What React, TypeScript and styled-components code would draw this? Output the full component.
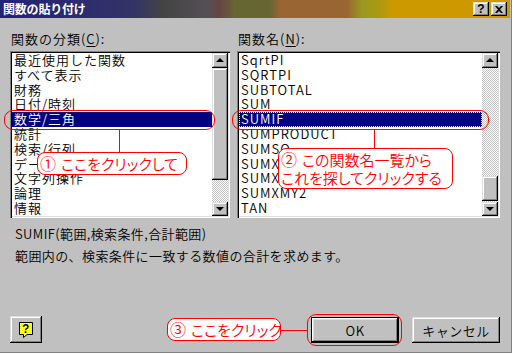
import React from "react";
import styled, { createGlobalStyle } from "styled-components";

const Global = createGlobalStyle`
  html, body { margin: 0; padding: 0; background: #ffffff; }
  body { font-family: "Noto Sans CJK JP", "Noto Sans", sans-serif; }
  #root { width: 514px; height: 354px; overflow: hidden; }
`;

const FONT = `"Noto Sans CJK JP", "Noto Sans", sans-serif`;
const bevel = `box-shadow: inset -1px -1px #000, inset 1px 1px #dfdfdf, inset -2px -2px #808080, inset 2px 2px #ffffff;`;

const Dialog = styled.div`
  position: relative;
  width: 512px;
  height: 353px;
  box-sizing: border-box;
  background: #c0c0c0;
  border-right: 1px solid #808080;
  border-bottom: 1px solid #808080;
  display: flex;
  flex-direction: column;
  font-family: ${FONT};
  font-weight: 350;
  color: #000;
`;

const TitleBar = styled.div`
  height: 18px;
  margin-right: 1px;
  display: flex;
  align-items: center;
  justify-content: space-between;
  padding: 0 3px 0 3px;
  background: linear-gradient(
    90deg,
    #222277 0%,
    #333366 26%,
    #444444 32%,
    #555055 41%,
    #664444 43%,
    #666633 46%,
    #666633 53%,
    #996633 55%,
    #996633 68%,
    #999922 71%,
    #aa9911 74%,
    #cc9900 77%,
    #cc9900 100%
  );
`;

const Title = styled.span`
  color: #fff;
  font-weight: bold;
  font-size: 12px;
  line-height: 18px;
  letter-spacing: -0.2px;
`;

const Controls = styled.div`
  display: flex;
  gap: 2px;
`;

const CaptionButton = styled.div`
  width: 16px;
  height: 14px;
  background: #c0c0c0;
  ${bevel}
  display: flex;
  align-items: center;
  justify-content: center;
  font-family: "Liberation Sans", sans-serif;
  font-weight: bold;
  font-size: 12px;
  line-height: 14px;
`;

const Body = styled.div`
  flex: 1;
  display: flex;
  flex-direction: column;
  padding: 12px 11px 9px 10px;
`;

const Columns = styled.div`
  display: flex;
  gap: 7px;
`;

const Column = styled.div<{ $w: number }>`
  width: ${(p) => p.$w}px;
  display: flex;
  flex-direction: column;
`;

const Label = styled.div`
  font-size: 13px;
  line-height: 17px;
  letter-spacing: 1px;
  margin-bottom: 4px;
  padding-left: 1px;
  u { text-decoration: underline; text-underline-offset: 2px; }
`;

const ListBox = styled.div`
  height: 167px;
  box-sizing: border-box;
  background: #fff;
  box-shadow: inset 1px 1px #808080, inset 2px 2px #000, inset -1px -1px #fff, inset -2px -2px #dfdfdf;
  padding: 2px;
  display: flex;
`;

const Items = styled.div`
  flex: 1;
  display: flex;
  flex-direction: column;
`;

const Item = styled.div<{ $sel?: boolean; $focus?: boolean }>`
  height: 14.8px;
  line-height: 14.8px;
  font-size: 13px;
  letter-spacing: 1px;
  padding-left: 2px;
  white-space: nowrap;
  background: ${(p) => (p.$sel ? "#000080" : "transparent")};
  color: ${(p) => (p.$sel ? "#fff" : "#000")};
  outline: ${(p) => (p.$focus ? "1px dotted #ffff99" : "none")};
  outline-offset: -1px;
`;

const ScrollBar = styled.div`
  width: 16px;
  display: flex;
  flex-direction: column;
`;

const ScrollBtn = styled.div`
  height: 14.5px;
  background: #c0c0c0;
  ${bevel}
  display: flex;
  align-items: center;
  justify-content: center;
`;

const Arrow = styled.div<{ $down?: boolean }>`
  width: 0;
  height: 0;
  border-left: 4px solid transparent;
  border-right: 4px solid transparent;
  ${(p) => (p.$down ? "border-top: 4px solid #000;" : "border-bottom: 4px solid #000;")}
`;

const Track = styled.div<{ $h?: number }>`
  ${(p) => (p.$h !== undefined ? `height: ${p.$h}px;` : "flex: 1;")}
  background: repeating-conic-gradient(#ffffff 0 25%, #c0c0c0 0 50%) 0 0 / 2px 2px;
`;

const Thumb = styled.div<{ $h: number }>`
  height: ${(p) => p.$h}px;
  background: #c0c0c0;
  ${bevel}
`;

const TextLine = styled.div<{ $mt: number }>`
  margin-top: ${(p) => p.$mt}px;
  padding-left: 5px;
  font-size: 13px;
  line-height: 16px;
  letter-spacing: 0.4px;
  white-space: nowrap;
`;

const Footer = styled.div`
  margin-top: auto;
  display: flex;
  align-items: flex-end;
`;

const Button = styled.div<{ $w: number; $h?: number; $default?: boolean }>`
  width: ${(p) => p.$w}px;
  height: ${(p) => p.$h ?? 26}px;
  box-sizing: border-box;
  background: #c0c0c0;
  display: flex;
  align-items: center;
  justify-content: center;
  font-size: 13px;
  letter-spacing: 0.5px;
  ${(p) =>
    p.$default
      ? "border: 1px solid #000; box-shadow: inset -1px -1px #000, inset 1px 1px #fff, inset -2px -2px #808080, inset 2px 2px #dfdfdf;"
      : bevel}
`;

const Spacer = styled.div`
  flex: 1;
`;

const ButtonGap = styled.div`
  width: 13px;
`;

/* Annotations laid over the dialog */
const Ring = styled.div<{ $x: number; $y: number; $w: number; $h: number }>`
  position: absolute;
  left: ${(p) => p.$x}px;
  top: ${(p) => p.$y}px;
  width: ${(p) => p.$w}px;
  height: ${(p) => p.$h}px;
  box-sizing: border-box;
  border: 1px solid #ff0000;
  border-radius: 9px;
  pointer-events: none;
`;

const Leader = styled.div<{ $x: number; $y: number; $w: number; $h: number }>`
  position: absolute;
  left: ${(p) => p.$x}px;
  top: ${(p) => p.$y}px;
  width: ${(p) => p.$w}px;
  height: ${(p) => p.$h}px;
  background: #ff0000;
`;

const Callout = styled.div<{ $x: number; $y: number; $w: number; $h: number }>`
  position: absolute;
  left: ${(p) => p.$x}px;
  top: ${(p) => p.$y}px;
  width: ${(p) => p.$w}px;
  height: ${(p) => p.$h}px;
  box-sizing: border-box;
  border: 1px solid #ff0000;
  border-radius: 8px;
  background: #ffffff;
  color: #ff0000;
  font-size: 15px;
  line-height: 18px;
  padding: 1px 0 0 2px;
  white-space: nowrap;
  font-feature-settings: "palt";
  display: flex;
  flex-direction: column;
`;

const Num = styled.span`
  font-size: 16px;
  margin-right: 5px;
  font-feature-settings: normal;
`;

const HelpIcon = () => (
  <svg width="16" height="18" viewBox="0 0 16 18">
    <defs>
      <pattern id="dots" width="2" height="2" patternUnits="userSpaceOnUse">
        <rect width="2" height="2" fill="#ffff00" />
        <rect width="1" height="1" fill="#ffffff" />
      </pattern>
    </defs>
    <path d="M1.5 1.5 H14.5 V13.5 H9 L5.5 16.5 V13.5 H1.5 Z" fill="url(#dots)" stroke="#000" strokeWidth="1" />
    <text x="8" y="12" textAnchor="middle" fontFamily="Liberation Sans, sans-serif" fontWeight="bold" fontSize="12" fill="#000080">?</text>
  </svg>
);

const CloseIcon = () => (
  <svg width="8" height="7" viewBox="0 0 8 7">
    <path d="M0 0 L2 0 L4 2 L6 0 L8 0 L5 3.5 L8 7 L6 7 L4 5 L2 7 L0 7 L3 3.5 Z" fill="#000" />
  </svg>
);

const categories = [
  "最近使用した関数",
  "すべて表示",
  "財務",
  "日付/時刻",
  "数学/三角",
  "統計",
  "検索/行列",
  "データベース",
  "文字列操作",
  "論理",
  "情報",
];

const functions = [
  "SqrtPI",
  "SQRTPI",
  "SUBTOTAL",
  "SUM",
  "SUMIF",
  "SUMPRODUCT",
  "SUMSQ",
  "SUMX2MY2",
  "SUMX2PY2",
  "SUMXMY2",
  "TAN",
];

export default function App() {
  return (
    <>
      <Global />
      <Dialog>
        <TitleBar>
          <Title>関数の貼り付け</Title>
          <Controls>
            <CaptionButton>?</CaptionButton>
            <CaptionButton>
              <CloseIcon />
            </CaptionButton>
          </Controls>
        </TitleBar>
        <Body>
          <Columns>
            <Column $w={221}>
              <Label>
                関数の分類(<u>C</u>):
              </Label>
              <ListBox>
                <Items>
                  {categories.map((c) => (
                    <Item key={c} $sel={c === "数学/三角"}>
                      {c}
                    </Item>
                  ))}
                </Items>
                <ScrollBar>
                  <ScrollBtn>
                    <Arrow />
                  </ScrollBtn>
                  <Thumb $h={112} />
                  <Track />
                  <ScrollBtn>
                    <Arrow $down />
                  </ScrollBtn>
                </ScrollBar>
              </ListBox>
            </Column>
            <Column $w={264}>
              <Label>
                関数名(<u>N</u>):
              </Label>
              <ListBox>
                <Items>
                  {functions.map((f) => (
                    <Item key={f} $sel={f === "SUMIF"} $focus={f === "SUMIF"}>
                      {f}
                    </Item>
                  ))}
                </Items>
                <ScrollBar>
                  <ScrollBtn>
                    <Arrow />
                  </ScrollBtn>
                  <Track $h={108} />
                  <Thumb $h={25} />
                  <Track />
                  <ScrollBtn>
                    <Arrow $down />
                  </ScrollBtn>
                </ScrollBar>
              </ListBox>
            </Column>
          </Columns>
          <TextLine $mt={8}>SUMIF(範囲,検索条件,合計範囲)</TextLine>
          <TextLine $mt={6}>範囲内の、検索条件に一致する数値の合計を求めます。</TextLine>
          <Footer>
            <Button $w={32} $h={27}>
              <HelpIcon />
            </Button>
            <Spacer />
            <Button $w={88} $default>
              OK
            </Button>
            <ButtonGap />
            <Button $w={88}>キャンセル</Button>
          </Footer>
        </Body>

        <Ring $x={4} $y={110} $w={211} $h={20} />
        <Leader $x={119} $y={130} $w={1} $h={22} />
        <Callout $x={37} $y={152} $w={150} $h={23}>
          <div>
            <Num>①</Num>ここをクリックして
          </div>
        </Callout>

        <Ring $x={232} $y={110} $w={257} $h={20} />
        <Leader $x={374} $y={130} $w={1} $h={18} />
        <Callout $x={278} $y={148} $w={175} $h={41}>
          <div>
            <Num>②</Num>この関数名一覧から
          </div>
          <div>これを探してクリックする</div>
        </Callout>

        <Callout $x={167} $y={318} $w={114} $h={23}>
          <div>
            <Num>③</Num>ここをクリック
          </div>
        </Callout>
        <Leader $x={281} $y={330} $w={26} $h={1} />
        <Ring $x={307} $y={314} $w={95} $h={32} />
      </Dialog>
    </>
  );
}
